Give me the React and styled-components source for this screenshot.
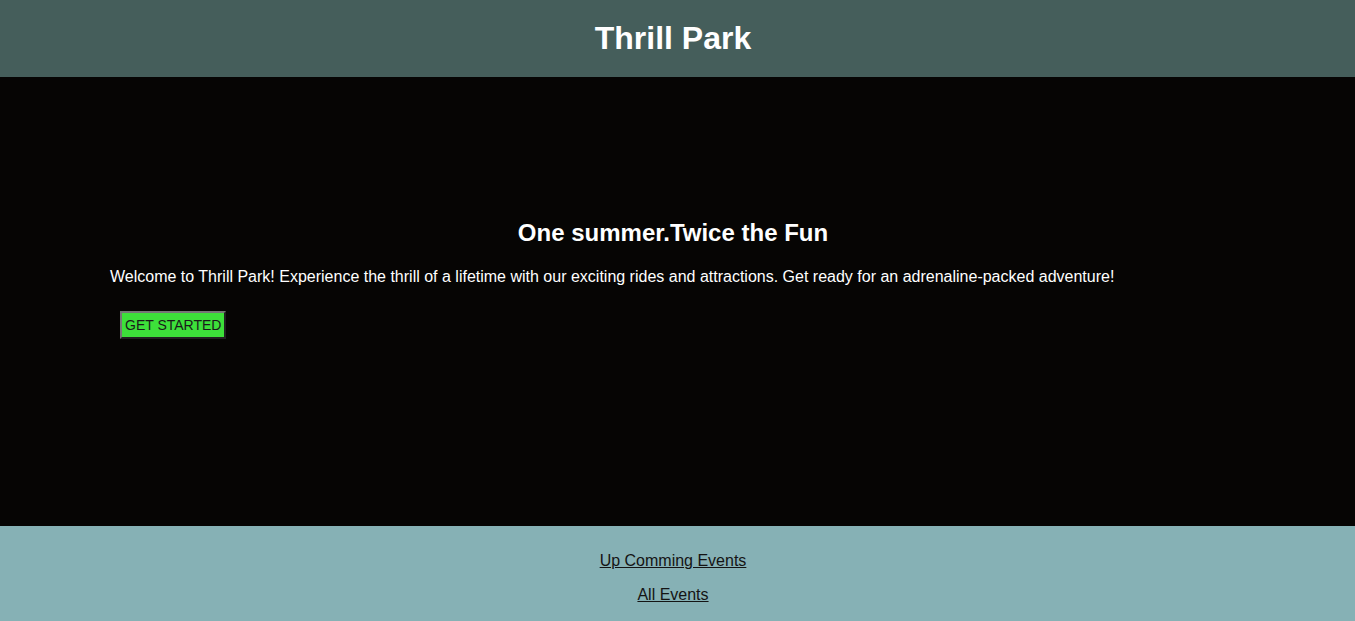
import React from "react";
import styled, {createGlobalStyle} from "styled-components";

const GlobalStyle = createGlobalStyle`
  body{
    margin: 0;
    font-family: "Liberation Sans", Arial, sans-serif;
    background-color: #060504;
  }
`;

const Header = styled.header`
  height: 77px;
  background-color: #455e5b;
  display: flex;
  align-items: center;
  justify-content: center;
  padding-right: 9px;
`;
const Title = styled.h1`
  margin: 0;
  font-size: 32px;
  color: white;
`;
const Hero = styled.section`
  height: 449px;
  box-sizing: border-box;
  padding: 142px 0 0 110px;
  background-color: #060504;
  color: white;
`;
const HeroHeading = styled.h2`
  margin: 0 0 21px;
  font-size: 24px;
  text-align: center;
  padding-right: 119px;
`;
const HeroText = styled.p`
  margin: 0 0 25px;
  font-size: 16px;
`;
const StartButton = styled.button`
  margin-left: 10px;
  height: 28px;
  padding: 0 3px;
  font-family: "Liberation Sans", Arial, sans-serif;
  font-size: 14px;
  color: #1a1a1a;
  background-color: #3de03a;
  border: 2px outset #767676;
`;
const Footer = styled.footer`
  height: 95px;
  box-sizing: border-box;
  padding-top: 26px;
  background-color: #86b1b5;
  display: flex;
  flex-direction: column;
  align-items: center;
  gap: 16px;
  padding-right: 9px;
`;
const FooterLink = styled.a`
  font-size: 16px;
  line-height: 18px;
  color: #141414;
  text-decoration: underline;
`;

export default function App() {
    return (
        <>
            <GlobalStyle/>
            <Header>
                <Title>Thrill Park</Title>
            </Header>
            <Hero>
                <HeroHeading>One summer.Twice the Fun</HeroHeading>
                <HeroText>Welcome to Thrill Park! Experience the thrill of a lifetime with our exciting rides and attractions. Get ready for an adrenaline-packed adventure!</HeroText>
                <StartButton>GET STARTED</StartButton>
            </Hero>
            <Footer>
                <FooterLink href="#">Up Comming Events</FooterLink>
                <FooterLink href="#">All Events</FooterLink>
            </Footer>
        </>
    )
}
